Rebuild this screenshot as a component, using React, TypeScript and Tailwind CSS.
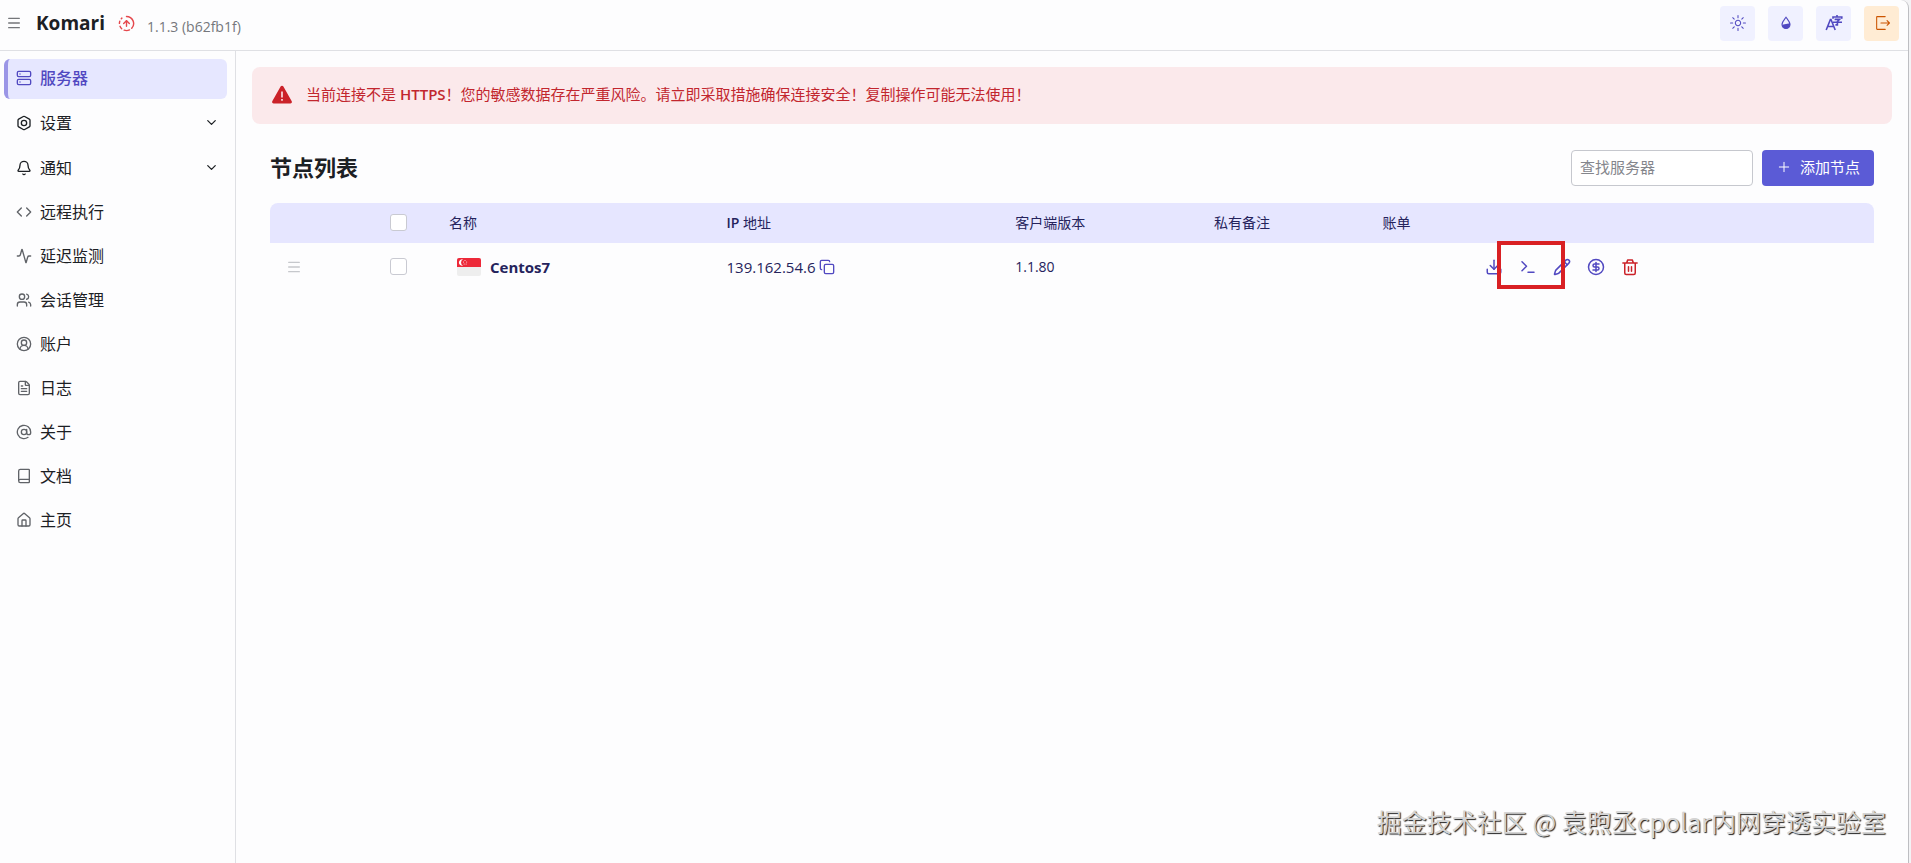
import { useState } from "react";
import type { ReactNode } from "react";
import {
  Activity,
  AtSign,
  Bell,
  Bolt,
  Book,
  ChevronDown,
  CircleDollarSign,
  CircleFadingArrowUp,
  CircleUserRound,
  Code,
  Copy,
  Download,
  FileText,
  House,
  Menu,
  Pencil,
  Plus,
  Server,
  Terminal,
  Users,
} from "lucide-react";
import { RxExit, RxSun } from "react-icons/rx";

type NavItem = {
  label: string;
  icon: ReactNode;
  active?: boolean;
  expandable?: boolean;
};

const iconProps = { size: 16, strokeWidth: 2 };

const navItems: NavItem[] = [
  { label: "服务器", icon: <Server {...iconProps} />, active: true },
  { label: "设置", icon: <Bolt {...iconProps} />, expandable: true },
  { label: "通知", icon: <Bell {...iconProps} />, expandable: true },
  { label: "远程执行", icon: <Code {...iconProps} /> },
  { label: "延迟监测", icon: <Activity {...iconProps} /> },
  { label: "会话管理", icon: <Users {...iconProps} /> },
  { label: "账户", icon: <CircleUserRound {...iconProps} /> },
  { label: "日志", icon: <FileText {...iconProps} /> },
  { label: "关于", icon: <AtSign {...iconProps} /> },
  { label: "文档", icon: <Book {...iconProps} /> },
  { label: "主页", icon: <House {...iconProps} /> },
];

const nodes = [
  { name: "Centos7", ip: "139.162.54.6", version: "1.1.80", note: "", bill: "" },
];

function DropIcon() {
  return (
    <svg width="16" height="16" viewBox="0 0 16 16" fill="none">
      <path
        d="M8 2.2C6.6 4.2 4 6.8 4 9.5a4 4 0 0 0 8 0C12 6.8 9.4 4.2 8 2.2Z"
        stroke="currentColor"
        strokeWidth="1.1"
      />
      <path d="M4 9.8 12 8.2V9.5a4 4 0 0 1-8 0Z" fill="currentColor" />
    </svg>
  );
}

function LanguageIcon() {
  return (
    <svg
      width="18"
      height="18"
      viewBox="0 0 18 18"
      fill="none"
      stroke="currentColor"
      strokeWidth="1.6"
    >
      <path d="M1.2 16 5.4 5.5h.6L10.2 16M2.7 12.5h6" />
      <path d="M12 1v2M8 4.8V3h8.8v1.8M9.6 5.4h5l-2.2 2.1v3.4h-2M8 8.3h9" />
    </svg>
  );
}

function WarningIcon() {
  return (
    <svg width="20" height="20" viewBox="0 0 20 20" className="shrink-0">
      <path
        d="M8.6 1.6a1.6 1.6 0 0 1 2.8 0l8.2 14.5a1.6 1.6 0 0 1-1.4 2.5H1.8a1.6 1.6 0 0 1-1.4-2.5Z"
        fill="#cb2229"
      />
      <path d="M10 6.5v6M10 14v1.8" stroke="#fbe9eb" strokeWidth="1.6" />
    </svg>
  );
}

function TrashIcon() {
  return (
    <svg
      width="18"
      height="18"
      viewBox="0 0 24 24"
      fill="none"
      stroke="currentColor"
      strokeWidth="2"
      strokeLinecap="round"
      strokeLinejoin="round"
    >
      <path d="M2.5 6.5h19M5 6.5V20a2 2 0 0 0 2 2h10a2 2 0 0 0 2-2V6.5M7.5 6.5 9 2.5h6l1.5 4M10 11.5v6M14 11.5v6" />
    </svg>
  );
}

function SingaporeFlag() {
  return (
    <svg width="24" height="18" viewBox="0 0 24 18" className="shrink-0">
      <rect width="24" height="18" rx="2" fill="#eeeeee" />
      <path d="M0 9V2a2 2 0 0 1 2-2h20a2 2 0 0 1 2 2v7Z" fill="#ed2939" />
      <path d="M6 1.3a3.3 3.3 0 1 0 0 6.4 3.6 3.6 0 0 1 0-6.4Z" fill="#fff" />
      <g fill="#fff">
        <circle cx="8" cy="2.4" r=".5" />
        <circle cx="6.5" cy="3.9" r=".5" />
        <circle cx="9.7" cy="3.9" r=".5" />
        <circle cx="7.1" cy="6" r=".5" />
        <circle cx="9.1" cy="6" r=".5" />
      </g>
    </svg>
  );
}

function IconButton({
  label,
  className,
  children,
}: {
  label: string;
  className: string;
  children: ReactNode;
}) {
  return (
    <button
      type="button"
      aria-label={label}
      className={`flex size-[35px] items-center justify-center rounded ${className}`}
    >
      {children}
    </button>
  );
}

function Header({ onToggle }: { onToggle: () => void }) {
  return (
    <header className="flex h-[51px] shrink-0 items-center justify-between border-b border-[#dfe0e4] pr-[9px] pb-1 pl-[6px]">
      <div className="flex items-center">
        <button type="button" aria-label="菜单" onClick={onToggle} className="text-[#74767a]">
          <Menu size={16} strokeWidth={2} />
        </button>
        <h1 className="ml-[14px] text-[19px] leading-6 font-bold">Komari</h1>
        <CircleFadingArrowUp size={17} strokeWidth={2} className="ml-[13px] text-[#e5484d]" />
        <span className="mt-2 ml-3 text-sm leading-6 text-[#75777c]">1.1.3 (b62fb1f)</span>
      </div>
      <div className="flex gap-[13px]">
        <IconButton label="主题" className="bg-[#f0f1ff] text-[#5149c1]">
          <RxSun size={16} />
        </IconButton>
        <IconButton label="颜色" className="bg-[#f0f1ff] text-[#5149c1]">
          <DropIcon />
        </IconButton>
        <IconButton label="语言" className="bg-[#f0f1ff] text-[#5149c1]">
          <LanguageIcon />
        </IconButton>
        <IconButton label="退出" className="bg-[#ffecd4] text-[#cc5500]">
          <RxExit size={16} />
        </IconButton>
      </div>
    </header>
  );
}

function Sidebar() {
  return (
    <nav className="flex w-[236px] shrink-0 flex-col gap-1 border-r border-[#dfe0e4] py-2 pr-2 pl-1">
      {navItems.map((item) => (
        <a
          key={item.label}
          href="#"
          className={`flex items-center gap-2 rounded-md border-l-4 px-2 pb-0.5 text-base leading-6 ${
            item.active
              ? "border-[#9b96e6] bg-[#e6e7ff] font-medium text-[#5149c1]"
              : "border-transparent"
          } ${item.expandable ? "h-[41px]" : "h-10"}`}
        >
          <span className={item.active || item.expandable ? "" : "text-[#606368]"}>
            {item.icon}
          </span>
          <span className="flex-1">{item.label}</span>
          {item.expandable && <ChevronDown size={15} strokeWidth={2} />}
        </a>
      ))}
    </nav>
  );
}

function HttpsWarning() {
  return (
    <div
      role="alert"
      className="flex h-[57px] items-center gap-[14px] rounded-lg bg-[#fbe9eb] px-5 pb-0.5 text-[15px] text-[#c2262e]"
    >
      <WarningIcon />
      <p>
        当前连接不是 <span className="font-semibold">HTTPS</span>
        ！您的敏感数据存在严重风险。请立即采取措施确保连接安全！复制操作可能无法使用！
      </p>
    </div>
  );
}

const checkboxClass =
  "mb-0.5 block size-[17px] appearance-none rounded-[3px] border border-[#c9cad2] bg-white checked:bg-[#5b5bd6]";

function NodeTable({ query }: { query: string }) {
  const rows = nodes.filter((n) => n.name.toLowerCase().includes(query.toLowerCase()));

  return (
    <table className="w-full table-fixed text-left text-[#25235c]">
      <thead className="bg-[#e6e6ff] text-sm">
        <tr className="h-10">
          <th aria-label="排序" className="w-[108px] rounded-tl-lg" />
          <th className="w-[59px] px-3">
            <input type="checkbox" aria-label="全选" className={checkboxClass} />
          </th>
          <th className="w-[17.3%] px-3 font-normal">名称</th>
          <th className="w-[18%] px-3 font-normal">
            <span className="font-semibold">IP</span> 地址
          </th>
          <th className="w-[12.4%] px-3 font-normal">客户端版本</th>
          <th className="w-[10.5%] px-3 font-normal">私有备注</th>
          <th className="w-[6.4%] px-3 font-normal">账单</th>
          <th aria-label="操作" className="rounded-tr-lg" />
        </tr>
      </thead>
      <tbody className="text-[15px]">
        {rows.map((node) => (
          <tr key={node.name} className="h-12">
            <td className="px-4">
              <button type="button" aria-label="拖动" className="block text-[#c6c8cc]">
                <Menu size={16} strokeWidth={2} />
              </button>
            </td>
            <td className="px-3">
              <input type="checkbox" aria-label={node.name} className={checkboxClass} />
            </td>
            <td className="px-5">
              <div className="flex items-center gap-[9px]">
                <SingaporeFlag />
                <span className="font-bold">{node.name}</span>
              </div>
            </td>
            <td className="px-3">
              <div className="flex items-center gap-[3px]">
                {node.ip}
                <button type="button" aria-label="复制" className="text-[#5149c1]">
                  <Copy size={16} strokeWidth={2} />
                </button>
              </div>
            </td>
            <td className="px-3 text-sm">{node.version}</td>
            <td className="px-3">{node.note}</td>
            <td className="px-3">{node.bill}</td>
            <td className="px-3">
              <div className="relative flex w-fit gap-4 text-[#5149c1]">
                <button type="button" aria-label="下载">
                  <Download size={18} />
                </button>
                <button type="button" aria-label="终端">
                  <Terminal size={18} />
                </button>
                <button type="button" aria-label="编辑">
                  <Pencil size={18} />
                </button>
                <button type="button" aria-label="账单">
                  <CircleDollarSign size={18} />
                </button>
                <button type="button" aria-label="删除" className="text-[#cb2229]">
                  <TrashIcon />
                </button>
                {/* highlight around the terminal action */}
                <div className="pointer-events-none absolute -top-[17px] left-3 h-12 w-[68px] border-4 border-[#d92024]" />
              </div>
            </td>
          </tr>
        ))}
      </tbody>
    </table>
  );
}

export default function App() {
  const [open, setOpen] = useState(true);
  const [query, setQuery] = useState("");

  return (
    <div className="min-h-screen bg-[#f3f3f5] pr-[2px] font-['Open_Sans','Noto_Sans_CJK_SC',sans-serif] text-[#1c2024]">
      <div className="relative flex min-h-screen flex-col rounded-tr-lg border-r border-[#bdbec2] bg-[#fdfdfe]">
        <Header onToggle={() => setOpen(!open)} />
        <div className="flex flex-1">
          {open && <Sidebar />}
          <main className="min-w-0 flex-1 p-4">
            <HttpsWarning />
            <section className="px-[18px] pt-[26px]">
              <div className="flex items-center justify-between">
                <h2 className="pb-0.5 text-[22px] leading-8 font-bold">节点列表</h2>
                <div className="flex gap-[9px]">
                  <input
                    type="text"
                    aria-label="查找服务器"
                    placeholder="查找服务器"
                    value={query}
                    onChange={(e) => setQuery(e.target.value)}
                    className="h-9 w-[182px] rounded border border-[#c6c8ce] bg-white px-2 pb-0.5 text-[15px] placeholder:text-[#84868c]"
                  />
                  <button
                    type="button"
                    className="flex h-9 items-center gap-2 rounded bg-[#5b5bd6] px-[14px] pb-0.5 text-[15px] text-white"
                  >
                    <Plus size={16} strokeWidth={1.5} />
                    添加节点
                  </button>
                </div>
              </div>
              <div className="mt-[17px]">
                <NodeTable query={query} />
              </div>
            </section>
          </main>
        </div>
        <div className="pointer-events-none absolute right-[22px] bottom-6 font-['Noto_Sans_CJK_SC',sans-serif] text-[25px] leading-9 text-[#d4d4d4] [text-shadow:1px_1px_1px_#222]">
          掘金技术社区 @ 袁煦丞cpolar内网穿透实验室
        </div>
      </div>
    </div>
  );
}
